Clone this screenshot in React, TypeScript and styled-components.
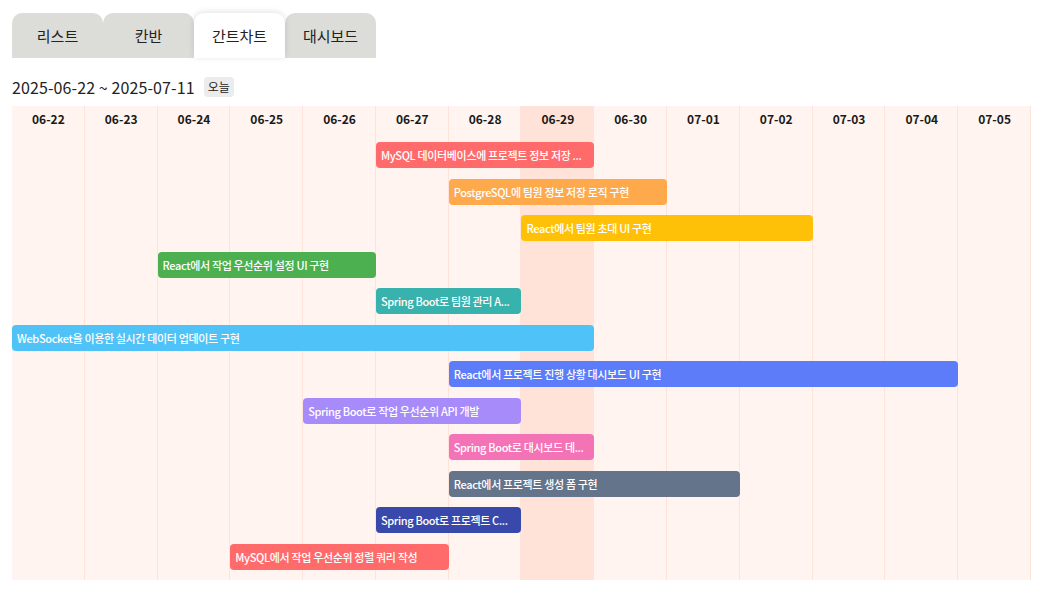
import React from "react";
import styled, { createGlobalStyle } from "styled-components";

const GlobalStyle = createGlobalStyle`
  html, body { margin: 0; padding: 0; background: #ffffff; }
  body {
    font-family: "Noto Sans CJK KR", "Noto Sans", "Liberation Sans", sans-serif;
    color: #1f1f1f;
  }
`;

const Page = styled.div`
  padding: 13px 16px 18px 12px;
  display: flex;
  flex-direction: column;
`;

const TabBar = styled.div`
  display: flex;
  align-items: flex-end;
`;

const Tab = styled.button<{ $active?: boolean }>`
  width: 91px;
  height: 45px;
  border: none;
  border-radius: 10px 10px 0 0;
  background: ${(p) => (p.$active ? "#ffffff" : "#dcdcd8")};
  box-shadow: ${(p) => (p.$active ? "0 -1px 6px rgba(0,0,0,0.12)" : "none")};
  position: relative;
  z-index: ${(p) => (p.$active ? 1 : 0)};
  font-family: inherit;
  font-size: 15px;
  color: #222;
  padding: 0;
  cursor: pointer;
`;

const RangeRow = styled.div`
  display: flex;
  align-items: center;
  gap: 9px;
  margin-top: 18px;
  height: 22px;
`;

const RangeText = styled.span`
  font-size: 16px;
  color: #222;
  letter-spacing: 0.1px;
`;

const TodayButton = styled.button`
  border: none;
  background: #ececec;
  border-radius: 4px;
  font-family: inherit;
  font-size: 12px;
  color: #222;
  padding: 1px 4px;
  height: 20px;
  line-height: 18px;
  cursor: pointer;
`;

const Chart = styled.div`
  margin-top: 8px;
  display: grid;
  grid-template-columns: repeat(14, 1fr);
  grid-template-rows: 31px repeat(12, 36.5px);
  padding-bottom: 5px;
  background: #fff4ef;
`;

const DayColumn = styled.div<{ $col: number; $today?: boolean }>`
  grid-column: ${(p) => p.$col};
  grid-row: 1 / -1;
  background: ${(p) => (p.$today ? "#ffe3d8" : "#fff4ef")};
  border-right: 1px solid #fde3da;
  margin-bottom: -5px;
`;

const DayLabel = styled.div<{ $col: number }>`
  grid-column: ${(p) => p.$col};
  grid-row: 1;
  z-index: 1;
  text-align: center;
  font-size: 12px;
  font-weight: 700;
  color: #1a1a1a;
  padding-top: 4px;
`;

const Bar = styled.div<{ $row: number; $start: number; $span: number; $color: string }>`
  grid-row: ${(p) => p.$row};
  grid-column: ${(p) => p.$start} / span ${(p) => p.$span};
  align-self: center;
  z-index: 1;
  height: 26px;
  border-radius: 4px;
  background: ${(p) => p.$color};
  color: #ffffff;
  font-size: 11px;
  font-weight: 500;
  letter-spacing: -0.35px;
  line-height: 26px;
  padding: 0 5px;
  white-space: nowrap;
  overflow: hidden;
  min-width: 0;
`;

const days = [
  "06-22", "06-23", "06-24", "06-25", "06-26", "06-27", "06-28",
  "06-29", "06-30", "07-01", "07-02", "07-03", "07-04", "07-05",
];

const tasks: { title: string; start: number; span: number; color: string }[] = [
  { title: "MySQL 데이터베이스에 프로젝트 정보 저장 ...", start: 5, span: 3, color: "#ff6b6b" },
  { title: "PostgreSQL에 팀원 정보 저장 로직 구현", start: 6, span: 3, color: "#ffa94d" },
  { title: "React에서 팀원 초대 UI 구현", start: 7, span: 4, color: "#ffc107" },
  { title: "React에서 작업 우선순위 설정 UI 구현", start: 2, span: 3, color: "#4caf50" },
  { title: "Spring Boot로 팀원 관리 A...", start: 5, span: 2, color: "#38b2ac" },
  { title: "WebSocket을 이용한 실시간 데이터 업데이트 구현", start: 0, span: 8, color: "#4fc3f7" },
  { title: "React에서 프로젝트 진행 상황 대시보드 UI 구현", start: 6, span: 7, color: "#5c7cfa" },
  { title: "Spring Boot로 작업 우선순위 API 개발", start: 4, span: 3, color: "#a78bfa" },
  { title: "Spring Boot로 대시보드 데...", start: 6, span: 2, color: "#f472b6" },
  { title: "React에서 프로젝트 생성 폼 구현", start: 6, span: 4, color: "#64748b" },
  { title: "Spring Boot로 프로젝트 C...", start: 5, span: 2, color: "#3949ab" },
  { title: "MySQL에서 작업 우선순위 정렬 쿼리 작성", start: 3, span: 3, color: "#ff6b6b" },
];

const tabs = ["리스트", "칸반", "간트차트", "대시보드"];

export default function App() {
  return (
    <>
      <GlobalStyle />
      <Page>
        <TabBar>
          {tabs.map((t) => (
            <Tab key={t} $active={t === "간트차트"}>
              {t}
            </Tab>
          ))}
        </TabBar>
        <RangeRow>
          <RangeText>2025-06-22 ~ 2025-07-11</RangeText>
          <TodayButton>오늘</TodayButton>
        </RangeRow>
        <Chart>
          {days.map((d, i) => (
            <DayColumn key={"c" + d} $col={i + 1} $today={d === "06-29"} />
          ))}
          {days.map((d, i) => (
            <DayLabel key={"l" + d} $col={i + 1}>
              {d}
            </DayLabel>
          ))}
          {tasks.map((t, i) => (
            <Bar key={i} $row={i + 2} $start={t.start + 1} $span={t.span} $color={t.color}>
              {t.title}
            </Bar>
          ))}
        </Chart>
      </Page>
    </>
  );
}
